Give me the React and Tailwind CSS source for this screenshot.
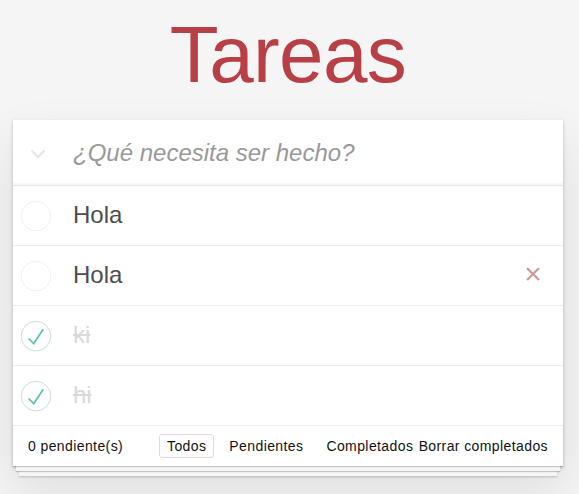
import React, { useState } from 'react';

const font = { fontFamily: '"Liberation Sans", Arial, sans-serif' };

function Toggle({ done }) {
  return (
    <svg width="40" height="40" viewBox="-10 -18 100 135" className="shrink-0">
      <circle cx="50" cy="50" r="50" fill="none" stroke={done ? '#bddad5' : '#ededed'} strokeWidth="3" />
      {done && <path fill="#5dc2af" d="M72 25L42 71 27 56l-4 4 20 20 34-52z" />}
    </svg>
  );
}

export default function App() {
  const [todos] = useState([
    { id: 1, title: 'Hola', done: false },
    { id: 2, title: 'Hola', done: false, hover: true },
    { id: 3, title: 'ki', done: true },
    { id: 4, title: 'hi', done: true },
  ]);
  const left = todos.filter(t => !t.done).length - 2;

  return (
    <div className="min-h-screen bg-[#f5f5f5] text-[#4d4d4d]" style={font}>
      <div className="w-[576px] pt-[15px]">
        <h1 className="text-center text-[80px] leading-[80px] tracking-[-0.6px] text-[#b83f45]">Tareas</h1>

        <div className="mx-auto mt-[25px] w-[550px] bg-white shadow-[0_2px_4px_0_rgba(0,0,0,0.2),0_25px_50px_0_rgba(0,0,0,0.1)]">
          {/* new todo */}
          <div className="flex h-[65px] items-center shadow-[inset_0_-2px_1px_rgba(0,0,0,0.03)]">
            <div className="flex w-[60px] pl-[17px] pt-[3px]">
              <svg width="16" height="10" viewBox="0 0 16 10">
                <polyline points="1.5,1.5 8,8 14.5,1.5" fill="none" stroke="#e6e6e6" strokeWidth="2.2" />
              </svg>
            </div>
            <span className="text-[24px] italic text-[#999]">¿Qué necesita ser hecho?</span>
          </div>

          <ul className="border-t border-[#e6e6e6]">
            {todos.map(t => (
              <li key={t.id} className="flex h-[60px] items-center border-b border-[#ededed]">
                <Toggle done={t.done} />
                <span
                  className={
                    'ml-[20px] flex-1 text-[24px] leading-[1.2] ' +
                    (t.done ? 'text-[#d9d9d9] line-through' : 'text-[#4d4d4d]')
                  }
                >
                  {t.title}
                </span>
                {t.hover && (
                  <span className="mr-[10px] flex h-[40px] w-[40px] items-center justify-center pb-[3px] text-[30px] leading-none text-[#cc9a9a]">
                    ×
                  </span>
                )}
              </li>
            ))}
          </ul>

          <footer className="flex h-[40px] items-center px-[15px] text-[14px] tracking-[0.4px] text-[#111] shadow-[0_1px_1px_rgba(0,0,0,0.2),0_8px_0_-3px_#f6f6f6,0_9px_1px_-3px_rgba(0,0,0,0.2),0_16px_0_-6px_#f6f6f6,0_17px_2px_-6px_rgba(0,0,0,0.2)]">
            <span className="w-[128px] shrink-0 whitespace-nowrap">{left} pendiente(s)</span>
            <ul className="flex shrink-0 gap-[1px]">
              {['Todos', 'Pendientes', 'Completados'].map((f, i) => (
                <li key={f} className="m-[3px]">
                  <a
                    className={
                      'block rounded-[3px] border px-[7px] py-[2px] leading-[18px] ' +
                      (i === 0 ? 'border-[rgba(175,47,47,0.2)]' : 'border-transparent')
                    }
                  >
                    {f}
                  </a>
                </li>
              ))}
            </ul>
            <div className="flex min-w-0 flex-1 justify-end whitespace-nowrap">
              <span>Borrar completados</span>
            </div>
          </footer>
        </div>
      </div>
    </div>
  );
}
